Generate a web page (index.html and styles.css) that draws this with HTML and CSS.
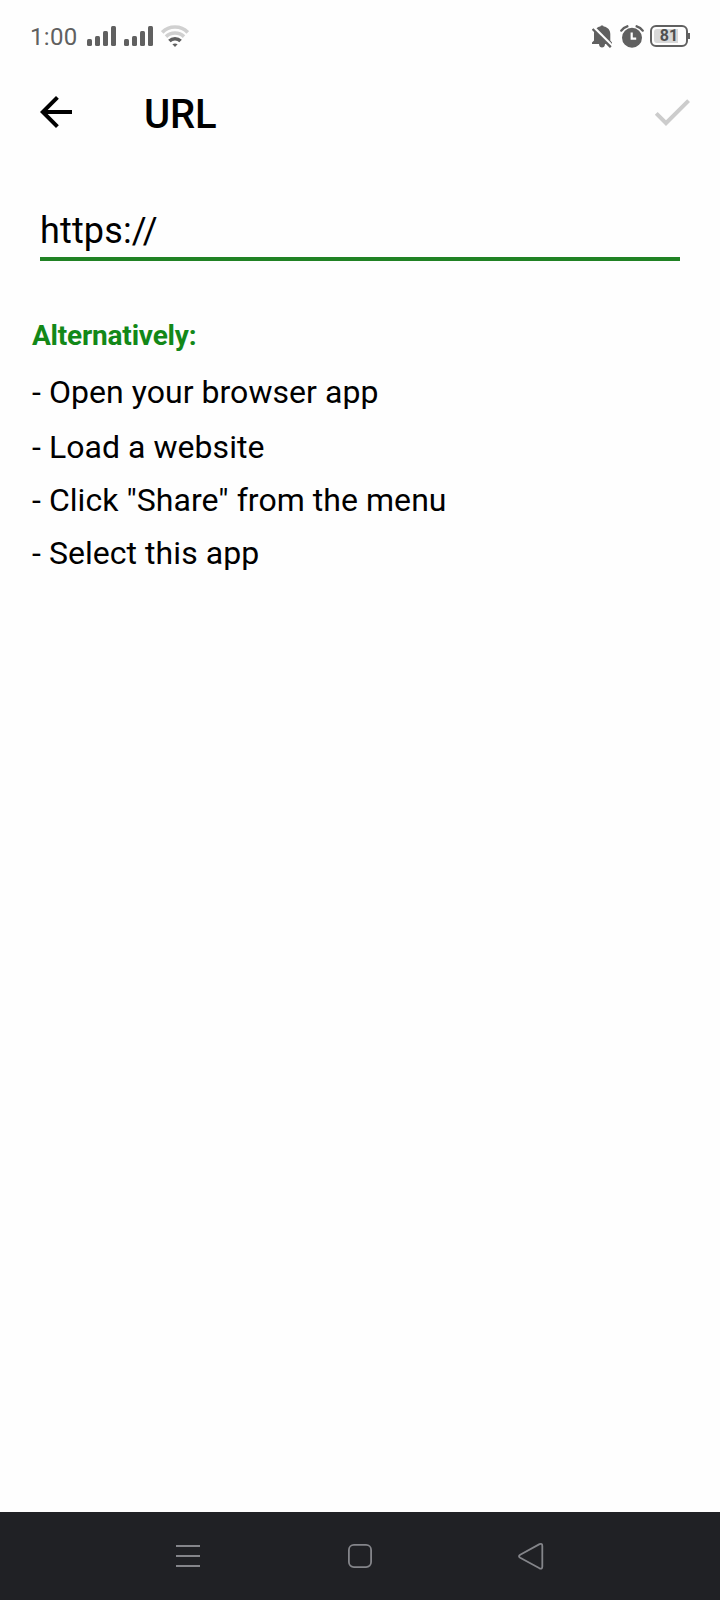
FILE: index.html
```html
<!DOCTYPE html>
<html lang="en">
<head>
  <meta charset="UTF-8">
  <meta name="viewport" content="width=device-width, initial-scale=1.0">
  <title>URL</title>
  <link rel="stylesheet" href="styles.css">
</head>
<body>

  <!-- Status bar -->
  <div class="status-bar">
    <div class="status-left">
      <span class="clock">1:00</span>
      <svg class="signal" width="29" height="20" viewBox="0 0 29 20">
        <rect x="0" y="13" width="5" height="7" rx="1.5"/>
        <rect x="8" y="10" width="5" height="10" rx="1.5"/>
        <rect x="16" y="5" width="5" height="15" rx="1.5"/>
        <rect x="24" y="0" width="5" height="20" rx="1.5"/>
      </svg>
      <svg class="signal" width="29" height="20" viewBox="0 0 29 20">
        <rect x="0" y="13" width="5" height="7" rx="1.5"/>
        <rect x="8" y="10" width="5" height="10" rx="1.5"/>
        <rect x="16" y="5" width="5" height="15" rx="1.5"/>
        <rect x="24" y="0" width="5" height="20" rx="1.5"/>
      </svg>
      <svg class="wifi" width="28" height="22" viewBox="0 0 28 22" fill="none" stroke-width="3.6">
        <path d="M1.2 7.4C8 .2 20 .2 26.8 7.4" stroke="#d0d0d0"/>
        <path d="M5 11.6C10 6.800 18 6.800 23 11.600" stroke="#d0d0d0"/>
        <path d="M8.400 16C11.500 13 16.500 13 19.600 16" stroke="#606060"/>
        <path d="M14 22l-2.600-2.800q2.600-1.600 5.200 0z" fill="#606060"/>
      </svg>
    </div>
    <div class="status-right">
      <svg width="20" height="23" viewBox="0 0 20 23">
        <path d="M10 .5c1 0 1.600.6 1.700 1.100C16 2.300 18.300 5.400 18.300 9v6.500l1.700 2V19H0v-1.500l2-2V9C2 5.400 4.200 2.300 8.300 1.600 8.400 1.100 9 .5 10 .5zM7 19h6c0 4.800-6 4.800-6 0z" fill="#606060"/>
        <path d="M0 .8L20 20.800" stroke="#fefefe" stroke-width="3"/>
        <path d="M.6 4L18.800 22.200" stroke="#606060" stroke-width="2.400"/>
      </svg>
      <svg class="alarm" width="24" height="23" viewBox="0 0 24 23">
        <circle cx="12" cy="12.800" r="10" fill="#606060"/>
        <path d="M1.300 5.600Q3.500 2.400 7.300 1.300M22.700 5.600Q20.500 2.400 16.700 1.300" fill="none" stroke="#606060" stroke-width="2.400" stroke-linecap="round"/>
        <path d="M11.700 7.500v6.200h4.500" fill="none" stroke="#fefefe" stroke-width="2.200"/>
      </svg>
      <div class="battery">
        <span class="battery-level">81</span>
      </div>
      <div class="battery-tip"></div>
    </div>
  </div>

  <!-- Toolbar -->
  <div class="toolbar">
    <svg width="48" height="48" viewBox="0 0 24 24">
      <path d="M20 11H7.830l5.590-5.590L12 4l-8 8 8 8 1.410-1.410L7.830 13H20v-2z"/>
    </svg>
    <h1>URL</h1>
    <svg class="done" width="48" height="48" viewBox="0 0 24 24">
      <path d="M9 16.170L4.830 12l-1.420 1.410L9 19 21 7l-1.410-1.410z"/>
    </svg>
  </div>

  <!-- URL form and instructions -->
  <div class="content">
    <input type="text" class="url-input" value="https://" aria-label="URL">

    <h2>Alternatively:</h2>
    <ul class="steps">
      <li>- Open your browser app</li>
      <li>- Load a website</li>
      <li>- Click "Share" from the menu</li>
      <li>- Select this app</li>
    </ul>
  </div>

  <!-- Navigation bar -->
  <div class="nav-bar">
    <svg width="28" height="28" viewBox="0 0 28 28">
      <path d="M2 4h24M2 14h24M2 24h24"/>
    </svg>
    <svg width="28" height="28" viewBox="0 0 28 28">
      <rect x="2.900" y="2.900" width="22.200" height="22.200" rx="5"/>
    </svg>
    <svg width="28" height="28" viewBox="0 0 28 28">
      <path d="M3.200 12.700L22.500 2.100Q25.300 1 25.300 4v20.500Q25.300 27.500 22.500 26.300L3.200 15.700Q.8 14.200 3.200 12.700z"/>
    </svg>
  </div>

</body>
</html>
```
FILE: styles.css
```css
* {
  box-sizing: border-box;
}

body {
  font-family: Roboto, sans-serif;
  margin: 0;
  min-height: 100vh;
  display: flex;
  flex-direction: column;
  background-color: #fefefe;
  color: #000;
}

svg {
  display: block;
}

.status-bar {
  height: 72px;
  padding: 0 30px;
  display: flex;
  justify-content: space-between;
  align-items: center;
}

.status-left,
.status-right {
  display: flex;
  align-items: center;
}

.clock {
  width: 57px;
  font-size: 24px;
  line-height: 28px;
  letter-spacing: 0.3px;
  padding-top: 2px;
  color: #606060;
}

.signal {
  margin-right: 8px;
  fill: #606060;
}

.alarm {
  margin: 0 6px 0 8px;
}

.battery {
  width: 38px;
  height: 22px;
  padding: 2px;
  border: 2px solid #606060;
  border-radius: 6px;
}

.battery-level {
  display: block;
  height: 14px;
  border-radius: 3px;
  background: linear-gradient(to right, #d8d8d8 81%, transparent 81%);
  color: #505050;
  font-size: 16px;
  font-weight: bold;
  line-height: 14px;
  text-align: center;
}

.battery-tip {
  width: 2px;
  height: 6px;
  background-color: #606060;
}

.toolbar {
  height: 80px;
  padding: 0 24px 0 32px;
  display: flex;
  align-items: center;
}

h1 {
  margin: 0 0 0 64px;
  padding-top: 6px;
  font-size: 40px;
  font-weight: 500;
  line-height: 48px;
  letter-spacing: -0.2px;
}

.done {
  margin-left: auto;
  fill: #ccc;
}

.content {
  flex: 1;
  padding: 55px 32px 0;
}

.url-input {
  display: block;
  width: 640px;
  height: 54px;
  margin: 0 8px;
  padding: 0 0 2px;
  border: none;
  border-bottom: 4px solid #208224;
  outline: none;
  background: transparent;
  color: #000;
  font-family: inherit;
  font-size: 36px;
  letter-spacing: 0.15px;
}

h2 {
  margin: 55px 0 10px;
  color: #138818;
  font-size: 28px;
  font-weight: bold;
  line-height: 40px;
  letter-spacing: -0.2px;
}

.steps {
  margin: 0;
  padding: 0;
  list-style: none;
  font-size: 32px;
  line-height: 53px;
  letter-spacing: 0.05px;
}

.steps li:first-child {
  margin-bottom: 2px;
}

.nav-bar {
  height: 88px;
  padding: 0 175px 0 174px;
  display: flex;
  justify-content: space-between;
  align-items: center;
  background-color: #202125;
}

.nav-bar svg {
  fill: none;
  stroke: #84858a;
  stroke-width: 1.8;
}
```
